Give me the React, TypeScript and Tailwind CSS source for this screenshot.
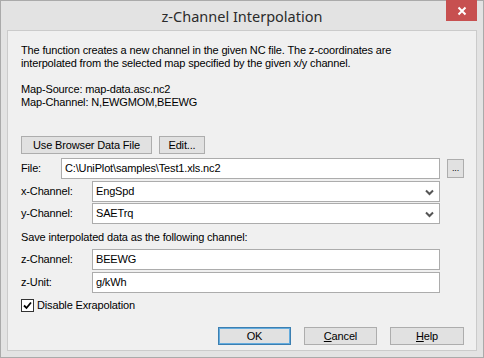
import React from 'react';

const font = { fontFamily: '"Liberation Sans", Arial, sans-serif' };

const Chevron = () => (
  <svg width="9" height="7" viewBox="0 0 9 7" className="absolute right-[5px] top-[7px]">
    <path d="M1 1.5 L4.5 5 L8 1.5" fill="none" stroke="#555" strokeWidth="2" />
  </svg>
);

const Field = ({ label, value, labelW, select }: { label: string; value: string; labelW: string; select?: boolean }) => (
  <div className="flex items-center">
    <div className={labelW}>{label}</div>
    <div className="relative w-[348px] h-[21px] bg-white border border-[#acacac] pl-[3px] flex items-center">
      {value}
      {select && <Chevron />}
    </div>
  </div>
);

const Btn = ({ children, w, primary }: { children: React.ReactNode; w: string; primary?: boolean }) => (
  <div
    className={`${w} h-[18px] flex items-center justify-center bg-[#e1e1e1] border ${
      primary ? 'border-[#3c7fb1] shadow-[inset_0_0_0_1px_#64acde]' : 'border-[#adadad]'
    }`}
  >
    {children}
  </div>
);

export default function App() {
  return (
    <div className="w-[484px] h-[358px] bg-[#e3e3e3] border border-[#aaaaaa] flex flex-col text-[11px] leading-[13px] tracking-[-0.15px] text-black" style={font}>
      {/* title bar */}
      <div className="relative h-[29px] flex items-center justify-center">
        <span className="text-[14.5px] tracking-normal text-[#2b2b2b] mt-[2px]" style={{ fontFamily: '"Noto Sans", "Open Sans", sans-serif' }}>
          z-Channel Interpolation
        </span>
        <div className="absolute top-[-1px] right-[6px] w-[31px] h-[21px] bg-[#c75050] flex items-center justify-center">
          <svg width="10" height="10" viewBox="0 0 10 10">
            <path d="M1.5 1.5 L8.5 8.5 M8.5 1.5 L1.5 8.5" stroke="#fff" strokeWidth="2" />
          </svg>
        </div>
      </div>

      {/* client area */}
      <div className="mx-[6px] h-[321px] bg-[#f0f0f0] border border-[#cbcbcb] pl-[13px] pr-[12px] pt-[13px] flex flex-col">
        <p>
          The function creates a new channel in the given NC file. The z-coordinates are
          <br />
          interpolated from the selected map specified by the given x/y channel.
        </p>
        <p className="mt-[13px]">
          Map-Source: map-data.asc.nc2
          <br />
          Map-Channel: N,EWGMOM,BEEWG
        </p>

        <div className="flex gap-[7px] mt-[27px]">
          <Btn w="w-[131px]">Use Browser Data File</Btn>
          <Btn w="w-[46px]">Edit...</Btn>
        </div>

        <div className="flex items-center mt-[4px]">
          <div className="w-[40px]">File:</div>
          <div className="w-[379px] h-[21px] bg-white border border-[#acacac] pl-[3px] flex items-center">
            C:\UniPlot\samples\Test1.xls.nc2
          </div>
          <div className="ml-[7px] w-[17px] h-[19px] bg-[#e1e1e1] border border-[#adadad] flex items-end justify-center pb-[4px] text-[9px] leading-[9px]">
            ...
          </div>
        </div>

        <div className="flex flex-col gap-[1px] mt-[2px]">
          <Field label="x-Channel:" value="EngSpd" labelW="w-[71px]" select />
          <Field label="y-Channel:" value="SAETrq" labelW="w-[71px]" select />
        </div>

        <p className="mt-[7px]">Save interpolated data as the following channel:</p>

        <div className="flex flex-col gap-[2px] mt-[5px]">
          <Field label="z-Channel:" value="BEEWG" labelW="w-[71px]" />
          <Field label="z-Unit:" value="g/kWh" labelW="w-[71px]" />
        </div>

        <label className="flex items-center mt-[6px]">
          <span className="w-[13px] h-[13px] bg-white border border-[#333] flex items-center justify-center">
            <svg width="9" height="9" viewBox="0 0 9 9">
              <path d="M1 4.5 L3.5 7 L8 1.5" fill="none" stroke="#000" strokeWidth="1.8" />
            </svg>
          </span>
          <span className="ml-[3px]">Disable Exrapolation</span>
        </label>

        <div className="flex justify-end gap-[13px] mt-[15px]">
          <Btn w="w-[73px]" primary>OK</Btn>
          <Btn w="w-[73px]">
            <span>
              <u>C</u>ancel
            </span>
          </Btn>
          <Btn w="w-[74px]">
            <span>
              <u>H</u>elp
            </span>
          </Btn>
        </div>
      </div>
    </div>
  );
}
